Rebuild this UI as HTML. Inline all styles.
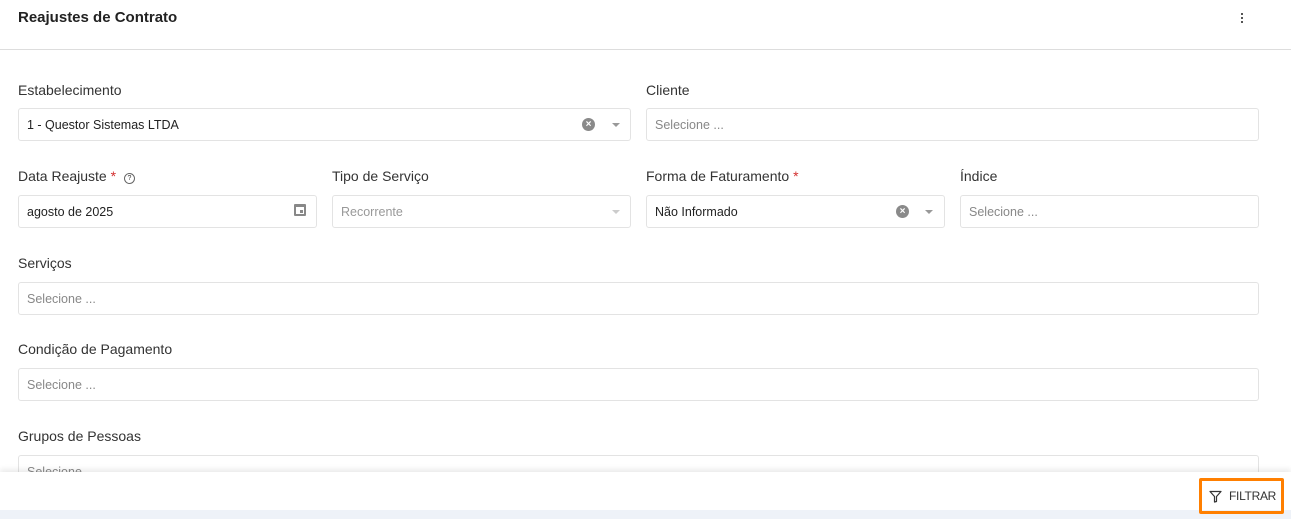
<!DOCTYPE html>
<html><head><meta charset="utf-8"><style>
body{margin:0;width:1291px;height:519px;overflow:hidden;background:#fff;font-family:"Liberation Sans",sans-serif;color:#222;position:relative}
.a{position:absolute}
.lbl{position:absolute;font-size:14px;color:#333}
.in{position:absolute;border:1px solid #e3e3e3;border-radius:3px;box-sizing:border-box;height:33px;font-size:12.5px;line-height:33px;padding-left:8px;color:#222}
.ph{color:#888}
.req{color:#d32f2f}
.clr{position:absolute;top:9px;width:13px;height:13px;border-radius:50%;background:#8a8a8a;color:#fff;font-size:10px;line-height:13px;text-align:center;font-weight:bold}
.car{position:absolute;top:14px;width:0;height:0;border-left:4px solid transparent;border-right:4px solid transparent;border-top:4px solid #999}
</style></head><body>
<div class="a" style="left:18px;top:9px;font-size:15px;font-weight:bold;color:#222">Reajustes de Contrato</div>
<div class="a" style="left:1241px;top:13px;width:3px">
<div style="width:2px;height:2px;background:#555;margin-bottom:2px"></div><div style="width:2px;height:2px;background:#555;margin-bottom:2px"></div><div style="width:2px;height:2px;background:#555"></div></div>
<div class="a" style="left:0;top:49px;width:1291px;height:1px;background:#ddd"></div>

<div class="lbl" style="left:18px;top:82px">Estabelecimento</div>
<div class="in" style="left:18px;top:108px;width:613px">1 - Questor Sistemas LTDA<div class="clr" style="left:563px">×</div><div class="car" style="left:593px"></div></div>
<div class="lbl" style="left:646px;top:82px">Cliente</div>
<div class="in ph" style="left:646px;top:108px;width:613px">Selecione ...</div>

<div class="lbl" style="left:18px;top:168px">Data Reajuste <span class="req">*</span> <span style="display:inline-block;width:9px;height:9px;border:1px solid #666;border-radius:50%;font-size:7px;line-height:9px;text-align:center;margin-left:4px;vertical-align:1px">?</span></div>
<div class="in" style="left:18px;top:195px;width:299px">agosto de 2025<div class="a" style="left:275px;top:8px;width:12px;height:12px;border:2px solid #888;border-top-width:3px;box-sizing:border-box;border-radius:1px"><div style="position:absolute;right:1px;bottom:1px;width:3px;height:3px;background:#888"></div></div></div>
<div class="lbl" style="left:332px;top:168px">Tipo de Serviço</div>
<div class="in ph" style="left:332px;top:195px;width:299px;color:#999">Recorrente<div class="car" style="left:279px;border-top-color:#ccc"></div></div>
<div class="lbl" style="left:646px;top:168px">Forma de Faturamento <span class="req">*</span></div>
<div class="in" style="left:646px;top:195px;width:299px">Não Informado<div class="clr" style="left:249px">×</div><div class="car" style="left:278px"></div></div>
<div class="lbl" style="left:960px;top:168px">Índice</div>
<div class="in ph" style="left:960px;top:195px;width:299px">Selecione ...</div>

<div class="lbl" style="left:18px;top:255px">Serviços</div>
<div class="in ph" style="left:18px;top:282px;width:1241px">Selecione ...</div>
<div class="lbl" style="left:18px;top:341px">Condição de Pagamento</div>
<div class="in ph" style="left:18px;top:368px;width:1241px">Selecione ...</div>
<div class="lbl" style="left:18px;top:428px">Grupos de Pessoas</div>
<div class="in ph" style="left:18px;top:455px;width:1241px">Selecione ...</div>

<div class="a" style="left:0;top:472px;width:1291px;height:38px;background:#fff;box-shadow:0 -3px 5px rgba(0,0,0,0.08)"></div>
<div class="a" style="left:0;top:510px;width:1291px;height:9px;background:#eef2f8"></div>
<div class="a" style="left:1199px;top:478px;width:85px;height:36px;border:3px solid #ff7f00;box-sizing:border-box;border-radius:2px;font-size:12px;line-height:30px;color:#333">
<svg style="position:absolute;left:7px;top:9px" width="13" height="13" viewBox="0 0 13 13"><path d="M1 1.5H12L7.5 6.5V11.5L5.5 12V6.5Z" fill="none" stroke="#333" stroke-width="1.2" stroke-linejoin="round"/></svg>
<span style="position:absolute;left:27px;letter-spacing:-0.3px">FILTRAR</span></div>
</body></html>
